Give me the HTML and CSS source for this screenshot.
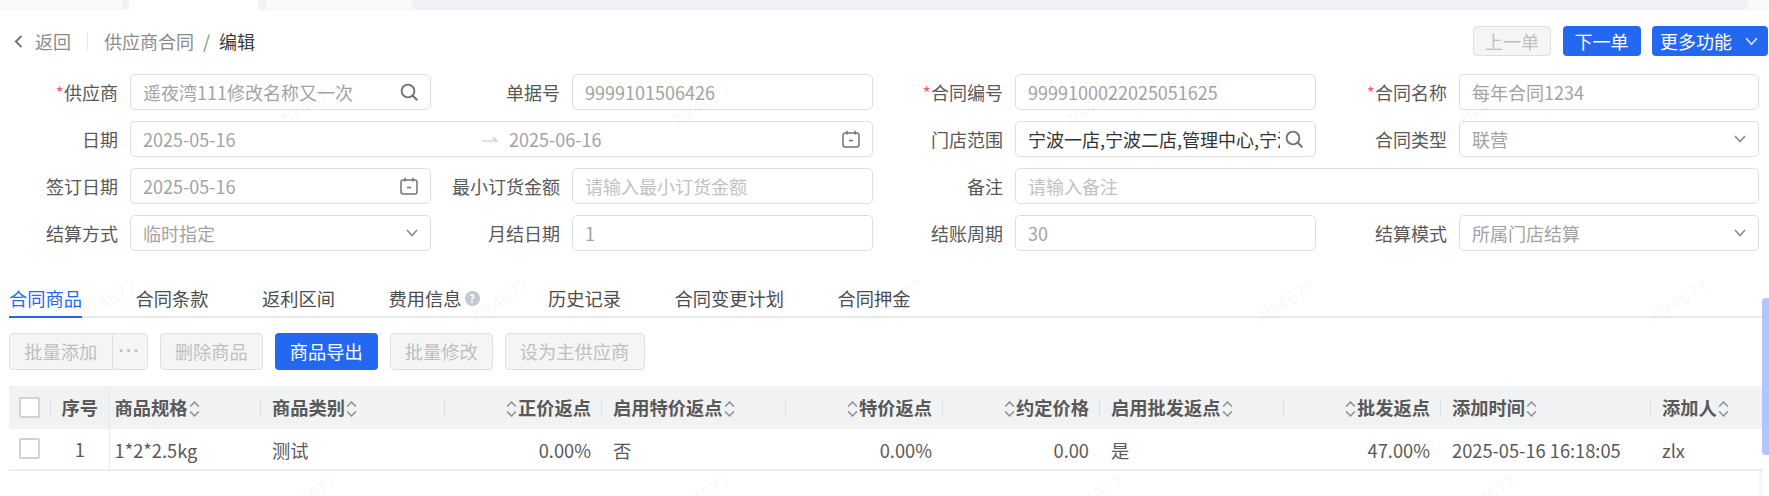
FILE: index.html
```html
<!DOCTYPE html>
<html lang="zh-CN">
<head>
<meta charset="utf-8">
<title>供应商合同</title>
<link rel="stylesheet" href="styles.css">
</head>
<body>
<svg class="defs" aria-hidden="true">
  <symbol id="i-search" viewBox="0 0 18 18"><circle cx="8" cy="8" r="6.4" fill="none" stroke="currentColor" stroke-width="1.9"/><path d="M12.8 12.8 16.8 16.8" fill="none" stroke="currentColor" stroke-width="2" stroke-linecap="round"/></symbol>
  <symbol id="i-cal" viewBox="0 0 18 18"><rect x="1" y="3" width="16" height="14" rx="2.2" fill="none" stroke="currentColor" stroke-width="1.5"/><path d="M5 .8V4.5M13 .8V4.5M7 10.5H11" fill="none" stroke="currentColor" stroke-width="1.5"/></symbol>
  <symbol id="i-down" viewBox="0 0 12 8"><path d="M1 1 6 6.5 11 1" fill="none" stroke="currentColor" stroke-width="1.6"/></symbol>
  <symbol id="i-sort" viewBox="0 0 11 18"><path d="M1.2 6.5 5.5 2 9.8 6.5M1.2 11.5 5.5 16 9.8 11.5" fill="none" stroke="currentColor" stroke-width="1.5"/></symbol>
  <symbol id="i-arrow" viewBox="0 0 16 6"><path d="M0 5H15L11 1.5" fill="none" stroke="currentColor" stroke-width="1.2"/></symbol>
  <symbol id="i-back" viewBox="0 0 9 13"><path d="M7.5 1 1.8 6.5 7.5 12" fill="none" stroke="currentColor" stroke-width="1.8"/></symbol>
</svg>

<div class="strip">
  <div class="strip-tab t1"></div>
  <div class="strip-tab t2"></div>
  <div class="strip-tab t3"></div>
  <div class="strip-tab t4"></div>
</div>

<header class="head">
  <nav class="crumbs">
    <svg class="back-icon"><use href="#i-back"/></svg>
    <span class="back">返回</span>
    <span class="crumb-sep"></span>
    <span>供应商合同</span>
    <span class="slash">/</span>
    <span class="crumb-now">编辑</span>
  </nav>
  <div class="head-actions">
    <button class="btn btn-off head-btn">上一单</button>
    <button class="btn btn-primary head-btn">下一单</button>
    <button class="btn btn-primary more-btn">更多功能<svg class="more-icon"><use href="#i-down"/></svg></button>
  </div>
</header>

<section class="form">
  <label class="lab"><i>*</i>供应商</label>
  <div class="field"><span class="val">遥夜湾111修改名称又一次</span><svg class="ico"><use href="#i-search"/></svg></div>
  <label class="lab">单据号</label>
  <div class="field"><span class="val">9999101506426</span></div>
  <label class="lab"><i>*</i>合同编号</label>
  <div class="field"><span class="val">9999100022025051625</span></div>
  <label class="lab"><i>*</i>合同名称</label>
  <div class="field"><span class="val">每年合同1234</span></div>

  <label class="lab">日期</label>
  <div class="field span3"><span class="val">2025-05-16</span><svg class="range-arrow"><use href="#i-arrow"/></svg><span class="val">2025-06-16</span><svg class="ico"><use href="#i-cal"/></svg></div>
  <label class="lab">门店范围</label>
  <div class="field"><span class="val strong">宁波一店,宁波二店,管理中心,宁波三店</span><svg class="ico"><use href="#i-search"/></svg></div>
  <label class="lab">合同类型</label>
  <div class="field"><span class="val">联营</span><svg class="chev"><use href="#i-down"/></svg></div>

  <label class="lab">签订日期</label>
  <div class="field"><span class="val">2025-05-16</span><svg class="ico"><use href="#i-cal"/></svg></div>
  <label class="lab">最小订货金额</label>
  <div class="field"><span class="val hint">请输入最小订货金额</span></div>
  <label class="lab">备注</label>
  <div class="field span3"><span class="val hint">请输入备注</span></div>

  <label class="lab">结算方式</label>
  <div class="field"><span class="val">临时指定</span><svg class="chev"><use href="#i-down"/></svg></div>
  <label class="lab">月结日期</label>
  <div class="field"><span class="val">1</span></div>
  <label class="lab">结账周期</label>
  <div class="field"><span class="val">30</span></div>
  <label class="lab">结算模式</label>
  <div class="field"><span class="val">所属门店结算</span><svg class="chev"><use href="#i-down"/></svg></div>
</section>

<nav class="tabs">
  <a class="tab active">合同商品</a>
  <a class="tab">合同条款</a>
  <a class="tab">返利区间</a>
  <a class="tab">费用信息<span class="help">?</span></a>
  <a class="tab">历史记录</a>
  <a class="tab">合同变更计划</a>
  <a class="tab">合同押金</a>
</nav>

<div class="toolbar">
  <div class="btn-group">
    <button class="btn btn-off">批量添加</button>
    <button class="btn btn-off dots">···</button>
  </div>
  <button class="btn btn-off">删除商品</button>
  <button class="btn btn-primary">商品导出</button>
  <button class="btn btn-off">批量修改</button>
  <button class="btn btn-off">设为主供应商</button>
</div>

<table class="grid">
  <colgroup>
    <col class="w-cb"><col class="w-no"><col class="w-spec"><col class="w-type"><col class="w-a"><col class="w-b"><col class="w-a"><col class="w-a"><col class="w-b"><col class="w-a"><col class="w-time"><col class="w-user">
  </colgroup>
  <thead>
    <tr>
      <th class="cb-cell"><span class="cb"></span></th>
      <th class="no-cell">序号</th>
      <th class="spec-cell">商品规格<svg class="sort"><use href="#i-sort"/></svg></th>
      <th>商品类别<svg class="sort"><use href="#i-sort"/></svg></th>
      <th class="num"><svg class="sort"><use href="#i-sort"/></svg>正价返点</th>
      <th>启用特价返点<svg class="sort"><use href="#i-sort"/></svg></th>
      <th class="num"><svg class="sort"><use href="#i-sort"/></svg>特价返点</th>
      <th class="num"><svg class="sort"><use href="#i-sort"/></svg>约定价格</th>
      <th>启用批发返点<svg class="sort"><use href="#i-sort"/></svg></th>
      <th class="num"><svg class="sort"><use href="#i-sort"/></svg>批发返点</th>
      <th>添加时间<svg class="sort"><use href="#i-sort"/></svg></th>
      <th class="last">添加人<svg class="sort"><use href="#i-sort"/></svg></th>
    </tr>
  </thead>
  <tbody>
    <tr>
      <td class="cb-cell"><span class="cb"></span></td>
      <td class="no-cell">1</td>
      <td class="spec-cell">1*2*2.5kg</td>
      <td>测试</td>
      <td class="num">0.00%</td>
      <td>否</td>
      <td class="num">0.00%</td>
      <td class="num">0.00</td>
      <td>是</td>
      <td class="num">47.00%</td>
      <td>2025-05-16 16:18:05</td>
      <td>zlx</td>
    </tr>
  </tbody>
</table>

<div class="scroll-thumb"></div>
<div class="side-panel"></div>

<div class="watermarks" aria-hidden="true">
  <div class="wm-row wm-odd"><span>zlx4677</span><span>zlx4677</span><span>zlx4677</span><span>zlx4677</span></div>
  <div class="wm-row wm-even"><span>zlx4677</span><span>zlx4677</span><span>zlx4677</span><span>zlx4677</span><span>zlx4677</span></div>
  <div class="wm-row wm-odd"><span>zlx4677</span><span>zlx4677</span><span>zlx4677</span><span>zlx4677</span></div>
</div>
</body>
</html>
```
FILE: styles.css
```css
* { box-sizing: border-box; }
html, body { margin: 0; padding: 0; }
body {
  position: relative;
  width: 1769px;
  height: 496px;
  overflow: hidden;
  background: #fff;
  color: #595959;
  font: 18.25px/26px "Noto Sans CJK SC", "Noto Sans", sans-serif;
}
.defs { position: absolute; width: 0; height: 0; }

/* top tab strip */
.strip {
  display: flex;
  height: 10px;
  background: #f0f2f5;
}
.strip-tab { height: 9px; background: #fafafb; }
.t1 { width: 122px; }
.t2 { width: 129px; height: 10px; margin-left: 7px; background: #fff; }
.t3 { width: 146px; margin-left: 8px; }
.t4 { width: 21px; margin-left: auto; }

/* header */
.head {
  display: flex;
  justify-content: space-between;
  align-items: center;
  height: 30px;
  margin-top: 16px;
  padding: 0 1px 0 14px;
  font-size: 18px;
}
.crumbs { display: flex; align-items: center; color: #8c8c8c; }
.back-icon { width: 9px; height: 13px; color: #707070; }
.back { margin-left: 12px; }
.crumb-sep { width: 1px; height: 17px; margin: 0 16px; background: #e6e6e6; }
.slash { margin: 0 9px; }
.crumb-now { color: #3c3c3c; }
.head-actions { display: flex; gap: 11.5px; }

.btn {
  display: inline-flex;
  align-items: center;
  justify-content: center;
  height: 37px;
  padding: 0 14.25px;
  border: 1px solid transparent;
  border-radius: 4px;
  font: inherit;
}
.btn-off { background: #f5f5f5; border-color: #e0e0e0; color: #bfbfbf; }
.btn-primary { background: #2468f2; color: #fff; }
.head-btn { width: 78px; height: 30px; padding: 0; }
.more-btn { width: 116px; height: 30px; padding: 0 9px 0 7px; justify-content: space-between; }
.more-icon { width: 13px; height: 9px; color: #d8e4ff; }

/* form */
.form {
  display: grid;
  grid-template-columns: 130px 301px 141px 301px 142px 301px 143px 300px;
  grid-auto-rows: 36px;
  row-gap: 11.3px;
  margin-top: 17.5px;
  font-size: 18px;
}
.lab {
  display: flex;
  align-items: center;
  justify-content: flex-end;
  padding-right: 12px;
  color: #595959;
}
.lab i { color: #f5606a; font-style: normal; }
.field {
  display: flex;
  align-items: center;
  padding: 0 12px;
  border: 1px solid #dedede;
  border-radius: 5px;
  min-width: 0;
}
.span3 { grid-column: span 3; }
.val { flex: 1; min-width: 0; white-space: nowrap; overflow: hidden; color: #a3a3a3; }
.strong { color: #333; }
.hint { color: #c2c2c2; }
.ico { flex: none; width: 18px; height: 18px; margin-left: 5px; color: #747474; }
.chev { flex: none; width: 12px; height: 8px; color: #8a8a8a; }
.range-arrow { flex: none; width: 16px; height: 6px; margin: 0 11px; color: #c4c4c4; }

/* tabs */
.tabs {
  display: flex;
  gap: 53.5px;
  height: 39px;
  margin: 27.5px 7px 0 9px;
  border-bottom: 2px solid #e8e9eb;
}
.tab { display: flex; align-items: flex-start; height: 39px; padding-top: 6px; color: #4d4d4d; }
.tab.active { color: #2468f2; border-bottom: 2px solid #2468f2; }
.help {
  display: flex;
  align-items: center;
  justify-content: center;
  width: 15px;
  height: 15px;
  margin: 6px 15px 0 3px;
  border-radius: 50%;
  background: #c3c7d3;
  color: #fff;
  font-size: 11px;
  line-height: 15px;
  font-weight: 700;
}

/* toolbar */
.toolbar {
  display: flex;
  gap: 11.5px;
  margin: 15px 0 0 9px;
}
.btn-group { display: flex; }
.btn-group .btn:first-child { border-radius: 4px 0 0 4px; }
.btn-group .dots {
  width: 36.5px;
  padding: 0;
  margin-left: -1px;
  border-radius: 0 4px 4px 0;
  font-family: "Liberation Sans", sans-serif;
  font-weight: 700;
  letter-spacing: 1.5px;
}

/* table */
.grid {
  width: 1753px;
  margin: 16px 0 0 9px;
  border-collapse: collapse;
  table-layout: fixed;
}
.w-cb { width: 42px; }
.w-no { width: 58px; }
.w-spec { width: 152px; }
.w-type { width: 184px; }
.w-a { width: 157px; }
.w-b { width: 184px; }
.w-time { width: 210px; }
.w-user { width: 111px; }
th, td {
  position: relative;
  padding: 0 11px;
  text-align: left;
  white-space: nowrap;
  color: #595959;
}
th {
  height: 43px;
  background: #f1f2f4;
  font-weight: 700;
}
th::after {
  content: "";
  position: absolute;
  right: 0;
  top: 13px;
  width: 1px;
  height: 17px;
  background: #dfe0e3;
}
th.last::after { display: none; }
td { height: 41px; padding-top: 2px; border-bottom: 2px solid #eeeeee; }
.num { text-align: right; }
.spec-cell { padding-left: 5px; }
.no-cell { padding: 0; text-align: center; border-right: 1px solid #e8e9eb; }
.no-cell::after { display: none; }
.cb-cell { padding: 0 0 0 10px; }
.cb {
  display: block;
  width: 21px;
  height: 21px;
  border: 2px solid #d2d2d2;
  border-radius: 2px;
  background: #fff;
}
.sort { width: 11px; height: 18px; vertical-align: -3px; margin: 0 1px; color: #8c8c8c; }

/* overlays */
.scroll-thumb {
  position: absolute;
  top: 298px;
  right: 0;
  width: 7px;
  height: 157px;
  border-radius: 4px 0 0 4px;
  background: #b3c5ff;
}
.side-panel {
  position: absolute;
  top: 470px;
  right: 0;
  width: 7px;
  height: 26px;
  background: #fff;
  box-shadow: -2px 0 4px rgba(0, 0, 0, .06);
}
.watermarks {
  position: absolute;
  inset: 0;
  display: grid;
  grid-auto-rows: 196px;
  padding-top: 7px;
  overflow: hidden;
  pointer-events: none;
}
.wm-row { display: flex; align-items: center; }
.wm-row span {
  flex: none;
  width: 393px;
  text-align: center;
  transform: rotate(-30deg);
  color: rgba(0, 0, 0, .045);
  font: 19px "Liberation Sans", sans-serif;
}
.wm-odd { padding-left: 112px; }
.wm-even { margin-left: -89px; }
```
